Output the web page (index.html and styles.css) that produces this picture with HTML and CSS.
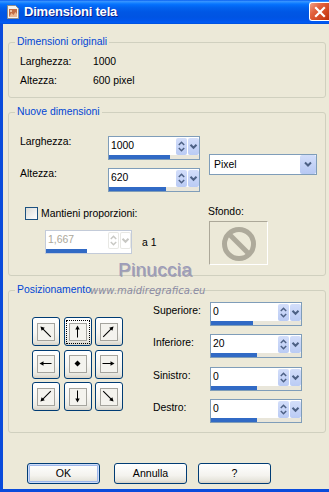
FILE: index.html
```html
<!DOCTYPE html>
<html lang="it">
<head>
<meta charset="utf-8">
<title>Dimensioni tela</title>
<link rel="stylesheet" href="styles.css">
</head>
<body>
<div class="window">
  <div class="titlebar">
    <svg class="app-icon" width="16" height="16" viewBox="0 0 16 16">
      <path d="M2.5 1.5h8l3 3v10h-11z" fill="#F6F3EC" stroke="#8C8C8C"/>
      <rect x="4" y="5" width="8" height="8" fill="#C46F45"/>
      <path d="M4 13 L6.5 9 L8.5 11 L10.5 8 L12 10 V13Z" fill="#EBB892"/>
      <circle cx="6" cy="7" r="1.1" fill="#F3D7B8"/>
    </svg>
    <span class="title">Dimensioni tela</span>
    <div class="close">
      <svg width="12" height="12" viewBox="0 0 12 12"><path d="M2 2L10 10M10 2L2 10" stroke="#fff" stroke-width="2.2" stroke-linecap="square"/></svg>
    </div>
  </div>

  <div class="client">
    <fieldset class="group g1">
      <legend>Dimensioni originali</legend>
      <div class="info-row"><span class="info-label">Larghezza:</span><span>1000</span></div>
      <div class="info-row"><span class="info-label">Altezza:</span><span>600 pixel</span></div>
    </fieldset>

    <fieldset class="group g2">
      <legend>Nuove dimensioni</legend>
      <div class="size-block">
        <div class="size-fields">
          <div class="field-row">
            <span class="field-label">Larghezza:</span>
            <div class="spin">
              <div class="spin-main">
                <span class="spin-val">1000</span>
                <span class="spin-btn"><svg viewBox="0 0 11 17"><polyline points="2.8,7 5.5,4.3 8.2,7"/><polyline points="2.8,10 5.5,12.7 8.2,10"/></svg></span>
                <span class="spin-btn"><svg viewBox="0 0 11 17"><polyline class="thick" points="2.5,6.8 5.5,9.8 8.5,6.8"/></svg></span>
              </div>
              <div class="spin-bar"><div class="spin-fill" style="width:61px"></div></div>
            </div>
          </div>
          <div class="field-row">
            <span class="field-label">Altezza:</span>
            <div class="spin">
              <div class="spin-main">
                <span class="spin-val">620</span>
                <span class="spin-btn"><svg viewBox="0 0 11 17"><polyline points="2.8,7 5.5,4.3 8.2,7"/><polyline points="2.8,10 5.5,12.7 8.2,10"/></svg></span>
                <span class="spin-btn"><svg viewBox="0 0 11 17"><polyline class="thick" points="2.5,6.8 5.5,9.8 8.5,6.8"/></svg></span>
              </div>
              <div class="spin-bar"><div class="spin-fill" style="width:57px"></div></div>
            </div>
          </div>
        </div>
        <div class="combo">
          <span class="combo-val">Pixel</span>
          <span class="combo-btn"><svg viewBox="0 0 16 19"><polyline class="thick" points="5,7.5 8,10.5 11,7.5"/></svg></span>
        </div>
      </div>

      <div class="ratio-block">
        <div class="ratio-left">
          <div class="check-row"><span class="checkbox"></span><span>Mantieni proporzioni:</span></div>
          <div class="ratio-row">
            <div class="spin disabled">
              <div class="spin-main">
                <span class="spin-val">1,667</span>
                <span class="spin-btn"><svg viewBox="0 0 11 17"><polyline points="2.8,7 5.5,4.3 8.2,7"/><polyline points="2.8,10 5.5,12.7 8.2,10"/></svg></span>
                <span class="spin-btn"><svg viewBox="0 0 11 17"><polyline class="thick" points="2.5,6.8 5.5,9.8 8.5,6.8"/></svg></span>
              </div>
              <div class="spin-bar"><div class="spin-fill" style="width:41px"></div></div>
            </div>
            <span class="ratio-suffix">a 1</span>
          </div>
        </div>
        <div class="bg-col">
          <span class="bg-label">Sfondo:</span>
          <div class="bg-swatch">
            <svg width="57" height="42" viewBox="0 0 57 42">
              <circle cx="29" cy="22" r="14.5" fill="none" stroke="#AEAA9B" stroke-width="5"/>
              <line x1="19" y1="12" x2="39" y2="32" stroke="#AEAA9B" stroke-width="5"/>
            </svg>
          </div>
        </div>
      </div>
    </fieldset>

    <fieldset class="group g3">
      <legend>Posizionamento</legend>
      <div class="pos-block">
        <div class="pos-grid">
          <div class="pbtn"><div class="pic"><svg viewBox="0 0 16 16"><g transform="rotate(-45 7.5 7.5)"><line x1="7.5" y1="15" x2="7.5" y2="3"/><polygon points="7.5,0.3 5.3,4.3 9.7,4.3"/></g></svg></div></div>
          <div class="pbtn"><div class="pic focus"><svg viewBox="0 0 16 16"><line x1="7.5" y1="13.5" x2="7.5" y2="4"/><polygon points="7.5,1.5 5.3,5.5 9.7,5.5"/></svg></div></div>
          <div class="pbtn"><div class="pic"><svg viewBox="0 0 16 16"><g transform="rotate(45 7.5 7.5)"><line x1="7.5" y1="15" x2="7.5" y2="3"/><polygon points="7.5,0.3 5.3,4.3 9.7,4.3"/></g></svg></div></div>
          <div class="pbtn"><div class="pic"><svg viewBox="0 0 16 16"><g transform="rotate(-90 7.5 7.5)"><line x1="7.5" y1="13.5" x2="7.5" y2="4"/><polygon points="7.5,1.5 5.3,5.5 9.7,5.5"/></g></svg></div></div>
          <div class="pbtn"><div class="pic"><svg viewBox="0 0 16 16"><polygon points="7.5,4.5 10.5,7.5 7.5,10.5 4.5,7.5"/></svg></div></div>
          <div class="pbtn"><div class="pic"><svg viewBox="0 0 16 16"><g transform="rotate(90 7.5 7.5)"><line x1="7.5" y1="13.5" x2="7.5" y2="4"/><polygon points="7.5,1.5 5.3,5.5 9.7,5.5"/></g></svg></div></div>
          <div class="pbtn"><div class="pic"><svg viewBox="0 0 16 16"><g transform="rotate(-135 7.5 7.5)"><line x1="7.5" y1="15" x2="7.5" y2="3"/><polygon points="7.5,0.3 5.3,4.3 9.7,4.3"/></g></svg></div></div>
          <div class="pbtn"><div class="pic"><svg viewBox="0 0 16 16"><g transform="rotate(180 7.5 7.5)"><line x1="7.5" y1="13.5" x2="7.5" y2="4"/><polygon points="7.5,1.5 5.3,5.5 9.7,5.5"/></g></svg></div></div>
          <div class="pbtn"><div class="pic"><svg viewBox="0 0 16 16"><g transform="rotate(135 7.5 7.5)"><line x1="7.5" y1="15" x2="7.5" y2="3"/><polygon points="7.5,0.3 5.3,4.3 9.7,4.3"/></g></svg></div></div>
        </div>
        <div class="margins">
          <div class="m-row">
            <span class="m-label">Superiore:</span>
            <div class="spin">
              <div class="spin-main">
                <span class="spin-val">0</span>
                <span class="spin-btn"><svg viewBox="0 0 11 17"><polyline points="2.8,7 5.5,4.3 8.2,7"/><polyline points="2.8,10 5.5,12.7 8.2,10"/></svg></span>
                <span class="spin-btn"><svg viewBox="0 0 11 17"><polyline class="thick" points="2.5,6.8 5.5,9.8 8.5,6.8"/></svg></span>
              </div>
              <div class="spin-bar"><div class="spin-fill" style="width:42px"></div></div>
            </div>
          </div>
          <div class="m-row">
            <span class="m-label">Inferiore:</span>
            <div class="spin">
              <div class="spin-main">
                <span class="spin-val">20</span>
                <span class="spin-btn"><svg viewBox="0 0 11 17"><polyline points="2.8,7 5.5,4.3 8.2,7"/><polyline points="2.8,10 5.5,12.7 8.2,10"/></svg></span>
                <span class="spin-btn"><svg viewBox="0 0 11 17"><polyline class="thick" points="2.5,6.8 5.5,9.8 8.5,6.8"/></svg></span>
              </div>
              <div class="spin-bar"><div class="spin-fill" style="width:46px"></div></div>
            </div>
          </div>
          <div class="m-row">
            <span class="m-label">Sinistro:</span>
            <div class="spin">
              <div class="spin-main">
                <span class="spin-val">0</span>
                <span class="spin-btn"><svg viewBox="0 0 11 17"><polyline points="2.8,7 5.5,4.3 8.2,7"/><polyline points="2.8,10 5.5,12.7 8.2,10"/></svg></span>
                <span class="spin-btn"><svg viewBox="0 0 11 17"><polyline class="thick" points="2.5,6.8 5.5,9.8 8.5,6.8"/></svg></span>
              </div>
              <div class="spin-bar"><div class="spin-fill" style="width:46px"></div></div>
            </div>
          </div>
          <div class="m-row">
            <span class="m-label">Destro:</span>
            <div class="spin">
              <div class="spin-main">
                <span class="spin-val">0</span>
                <span class="spin-btn"><svg viewBox="0 0 11 17"><polyline points="2.8,7 5.5,4.3 8.2,7"/><polyline points="2.8,10 5.5,12.7 8.2,10"/></svg></span>
                <span class="spin-btn"><svg viewBox="0 0 11 17"><polyline class="thick" points="2.5,6.8 5.5,9.8 8.5,6.8"/></svg></span>
              </div>
              <div class="spin-bar"><div class="spin-fill" style="width:46px"></div></div>
            </div>
          </div>
        </div>
      </div>
    </fieldset>

    <div class="buttons">
      <div class="btn btn-ok">OK</div>
      <div class="btn btn-cancel">Annulla</div>
      <div class="btn btn-help">?</div>
    </div>
  </div>

  <div class="wm-name">Pinuccia</div>
  <div class="wm-url">www.maidiregrafica.eu</div>
</div>
</body>
</html>
```
FILE: styles.css
```css
* { box-sizing: border-box; }
html, body { margin: 0; padding: 0; }
body {
  width: 329px;
  height: 492px;
  overflow: hidden;
  background: #ECE9D8;
  color: #000;
  font-family: "Liberation Sans", Arial, sans-serif;
  font-size: 10.4px;
}
.window {
  position: relative;
  width: 329px;
  height: 492px;
  display: flex;
  flex-direction: column;
}

/* title bar */
.titlebar {
  flex: none;
  height: 24px;
  display: flex;
  align-items: center;
  padding-left: 5px;
  background: linear-gradient(180deg, #0058EE 0%, #3A93FF 5%, #288EFF 9%, #127DFF 14%, #036FFC 20%, #0262EE 32%, #0057E5 50%, #0054E3 70%, #0055EB 86%, #005BF5 93%, #0050DA 100%);
}
.app-icon { flex: none; display: block; }
.title {
  margin-left: 3px;
  color: #fff;
  font-weight: bold;
  font-size: 13px;
  letter-spacing: -0.2px;
  line-height: 24px;
  text-shadow: 1px 1px 0 #0A1E8C;
}
.close {
  margin-left: auto;
  align-self: flex-start;
  margin-top: 2px;
  width: 20px;
  height: 19px;
  border: 1px solid #fff;
  border-right: none;
  border-radius: 3px 0 0 3px;
  background: linear-gradient(135deg, #F0A087 0%, #E2623E 35%, #D1461F 70%, #BE2E0C 100%);
  display: flex;
  align-items: center;
  justify-content: center;
}
.close svg { display: block; }

/* client area */
.client {
  flex: 1;
  background: #ECE9D8;
  border-left: 3px solid #0A4BDB;
  border-bottom: 3px solid #0A4BDB;
  padding: 12px 0 0 5px;
}

.group {
  width: 318px;
  margin: 0;
  padding: 0 0 0 11px;
  border: 1px solid #D0D0BF;
  border-radius: 3px;
  min-inline-size: 0;
}
.group + .group { margin-top: 8px; }
.group legend {
  margin-left: -5px;
  padding: 0 2px;
  color: #0046D5;
  font-size: 10.4px;
  line-height: 12px;
}
.g1 { height: 62px; padding-top: 4px; }
.g2 { height: 170px; padding-top: 18px; }
.g3 { height: 149px; padding-top: 6px; }

.info-row { display: flex; line-height: 19px; }
.info-label { width: 73px; }

/* size block */
.size-block { display: flex; align-items: center; }
.size-fields { display: flex; flex-direction: column; gap: 8px; }
.field-row { display: flex; align-items: flex-start; }
.field-label { width: 88px; line-height: 13px; margin-top: -1px; }

/* spin edit */
.spin {
  width: 92px;
  height: 24px;
  border: 1px solid #7F9DB9;
  background: #fff;
  display: flex;
  flex-direction: column;
}
.spin-main { height: 18px; display: flex; padding-top: 1px; }
.spin-val { flex: 1; padding-left: 2px; padding-top: 1px; line-height: 13px; }
.spin-btn {
  width: 11px;
  height: 17px;
  margin-left: 1px;
  border-radius: 2px;
  background: linear-gradient(180deg, #D3DEFA 0%, #BACBF4 100%);
}
.spin-btn svg, .combo-btn svg { display: block; width: 100%; height: 100%; }
.spin-btn polyline, .combo-btn polyline {
  fill: none;
  stroke: #4D6185;
  stroke-width: 1.5;
}
.spin-btn polyline.thick, .combo-btn polyline.thick { stroke-width: 2; }
.spin-bar { height: 4px; background: #E9E6DA; }
.spin-fill { height: 100%; background: #316AC5; }

.spin.disabled { width: 87px; margin-left: 25px; border-color: #C3CBD9; }
.spin.disabled .spin-val { color: #ACA899; }
.spin.disabled .spin-btn { background: #fff; box-shadow: inset 0 0 0 1px #E8E8E4; }
.spin.disabled .spin-btn polyline { stroke: #C8C8C4; }
.spin.disabled .spin-bar { background: #fff; }

/* combo */
.combo {
  margin-left: 9px;
  width: 108px;
  height: 21px;
  border: 1px solid #7F9DB9;
  background: #fff;
  display: flex;
}
.combo-val { flex: 1; padding-left: 4px; line-height: 19px; }
.combo-btn {
  width: 16px;
  height: 19px;
  border-radius: 2px;
  background: linear-gradient(180deg, #D3DEFA 0%, #B6C8F3 100%);
}

/* ratio block */
.ratio-block { display: flex; margin-top: 14px; }
.ratio-left { width: 188px; }
.check-row { display: flex; align-items: center; height: 15px; }
.checkbox {
  width: 13px;
  height: 13px;
  margin-left: 5px;
  margin-right: 3px;
  border: 1px solid #1C5180;
  background: linear-gradient(135deg, #DCDCD7 0%, #FFFFFF 100%);
}
.ratio-row { display: flex; align-items: center; margin-top: 9px; }
.ratio-suffix { margin-left: 10px; }
.bg-col { display: flex; flex-direction: column; margin-top: -1px; }
.bg-label { line-height: 13px; }
.bg-swatch {
  margin-left: 1px;
  margin-top: 3px;
  width: 59px;
  height: 44px;
  border: 1px solid;
  border-color: #ACA899 #FFFFFF #FFFFFF #ACA899;
}
.bg-swatch svg { display: block; }

/* position block */
.pos-block { display: flex; align-items: flex-start; }
.pos-grid {
  display: grid;
  grid-template-columns: repeat(3, 28px);
  grid-template-rows: repeat(3, 29px);
  column-gap: 3.5px;
  row-gap: 3.5px;
  margin-left: 12px;
  margin-top: 15px;
}
.pbtn {
  border: 1px solid #003C74;
  border-radius: 3px;
  background: linear-gradient(180deg, #FFFFFF 0%, #F6F5F1 55%, #E9E8E1 85%, #D8D3C8 100%);
  display: flex;
  align-items: center;
  justify-content: center;
}
.pic {
  width: 18px;
  height: 18px;
  border: 1px solid #A5A49E;
  background: #F4F3EE;
}
.pic.focus { outline: 1px dotted #000; outline-offset: 2px; }
.pic svg { display: block; width: 16px; height: 16px; }
.pic line { stroke: #000; stroke-width: 1; }
.pic polygon { fill: #000; }

.margins { margin-left: 30px; display: flex; flex-direction: column; gap: 8.33px; }
.m-row { display: flex; align-items: flex-start; }
.m-label { width: 57px; line-height: 13px; margin-top: 2px; }

/* buttons */
.buttons { display: flex; margin-top: 30px; }
.btn {
  width: 73px;
  height: 21px;
  border: 1px solid #003C74;
  border-radius: 3px;
  background: linear-gradient(180deg, #FFFFFF 0%, #F4F3EE 60%, #E6E4DB 88%, #D6D0C5 100%);
  text-align: center;
  line-height: 19px;
  font-size: 10.6px;
}
.btn-ok {
  margin-left: 19px;
  box-shadow: inset 0 0 0 1px #CEDCF8, inset 0 0 0 2px #9FB8EC;
}
.btn-cancel { margin-left: 14px; }
.btn-help { margin-left: 11px; }

/* watermark overlay */
.wm-name {
  position: absolute;
  left: 118px;
  top: 260px;
  font-family: "Liberation Sans", Arial, sans-serif;
  font-size: 19px;
  line-height: 20px;
  letter-spacing: 0.3px;
  color: #9C9CBA;
  text-shadow: 1px 1px 0 rgba(90, 90, 125, 0.45);
}
.wm-url {
  position: absolute;
  left: 90px;
  top: 285px;
  font-family: "DejaVu Sans", sans-serif;
  font-style: italic;
  font-size: 10px;
  line-height: 12px;
  color: #8A8AA2;
}
```
